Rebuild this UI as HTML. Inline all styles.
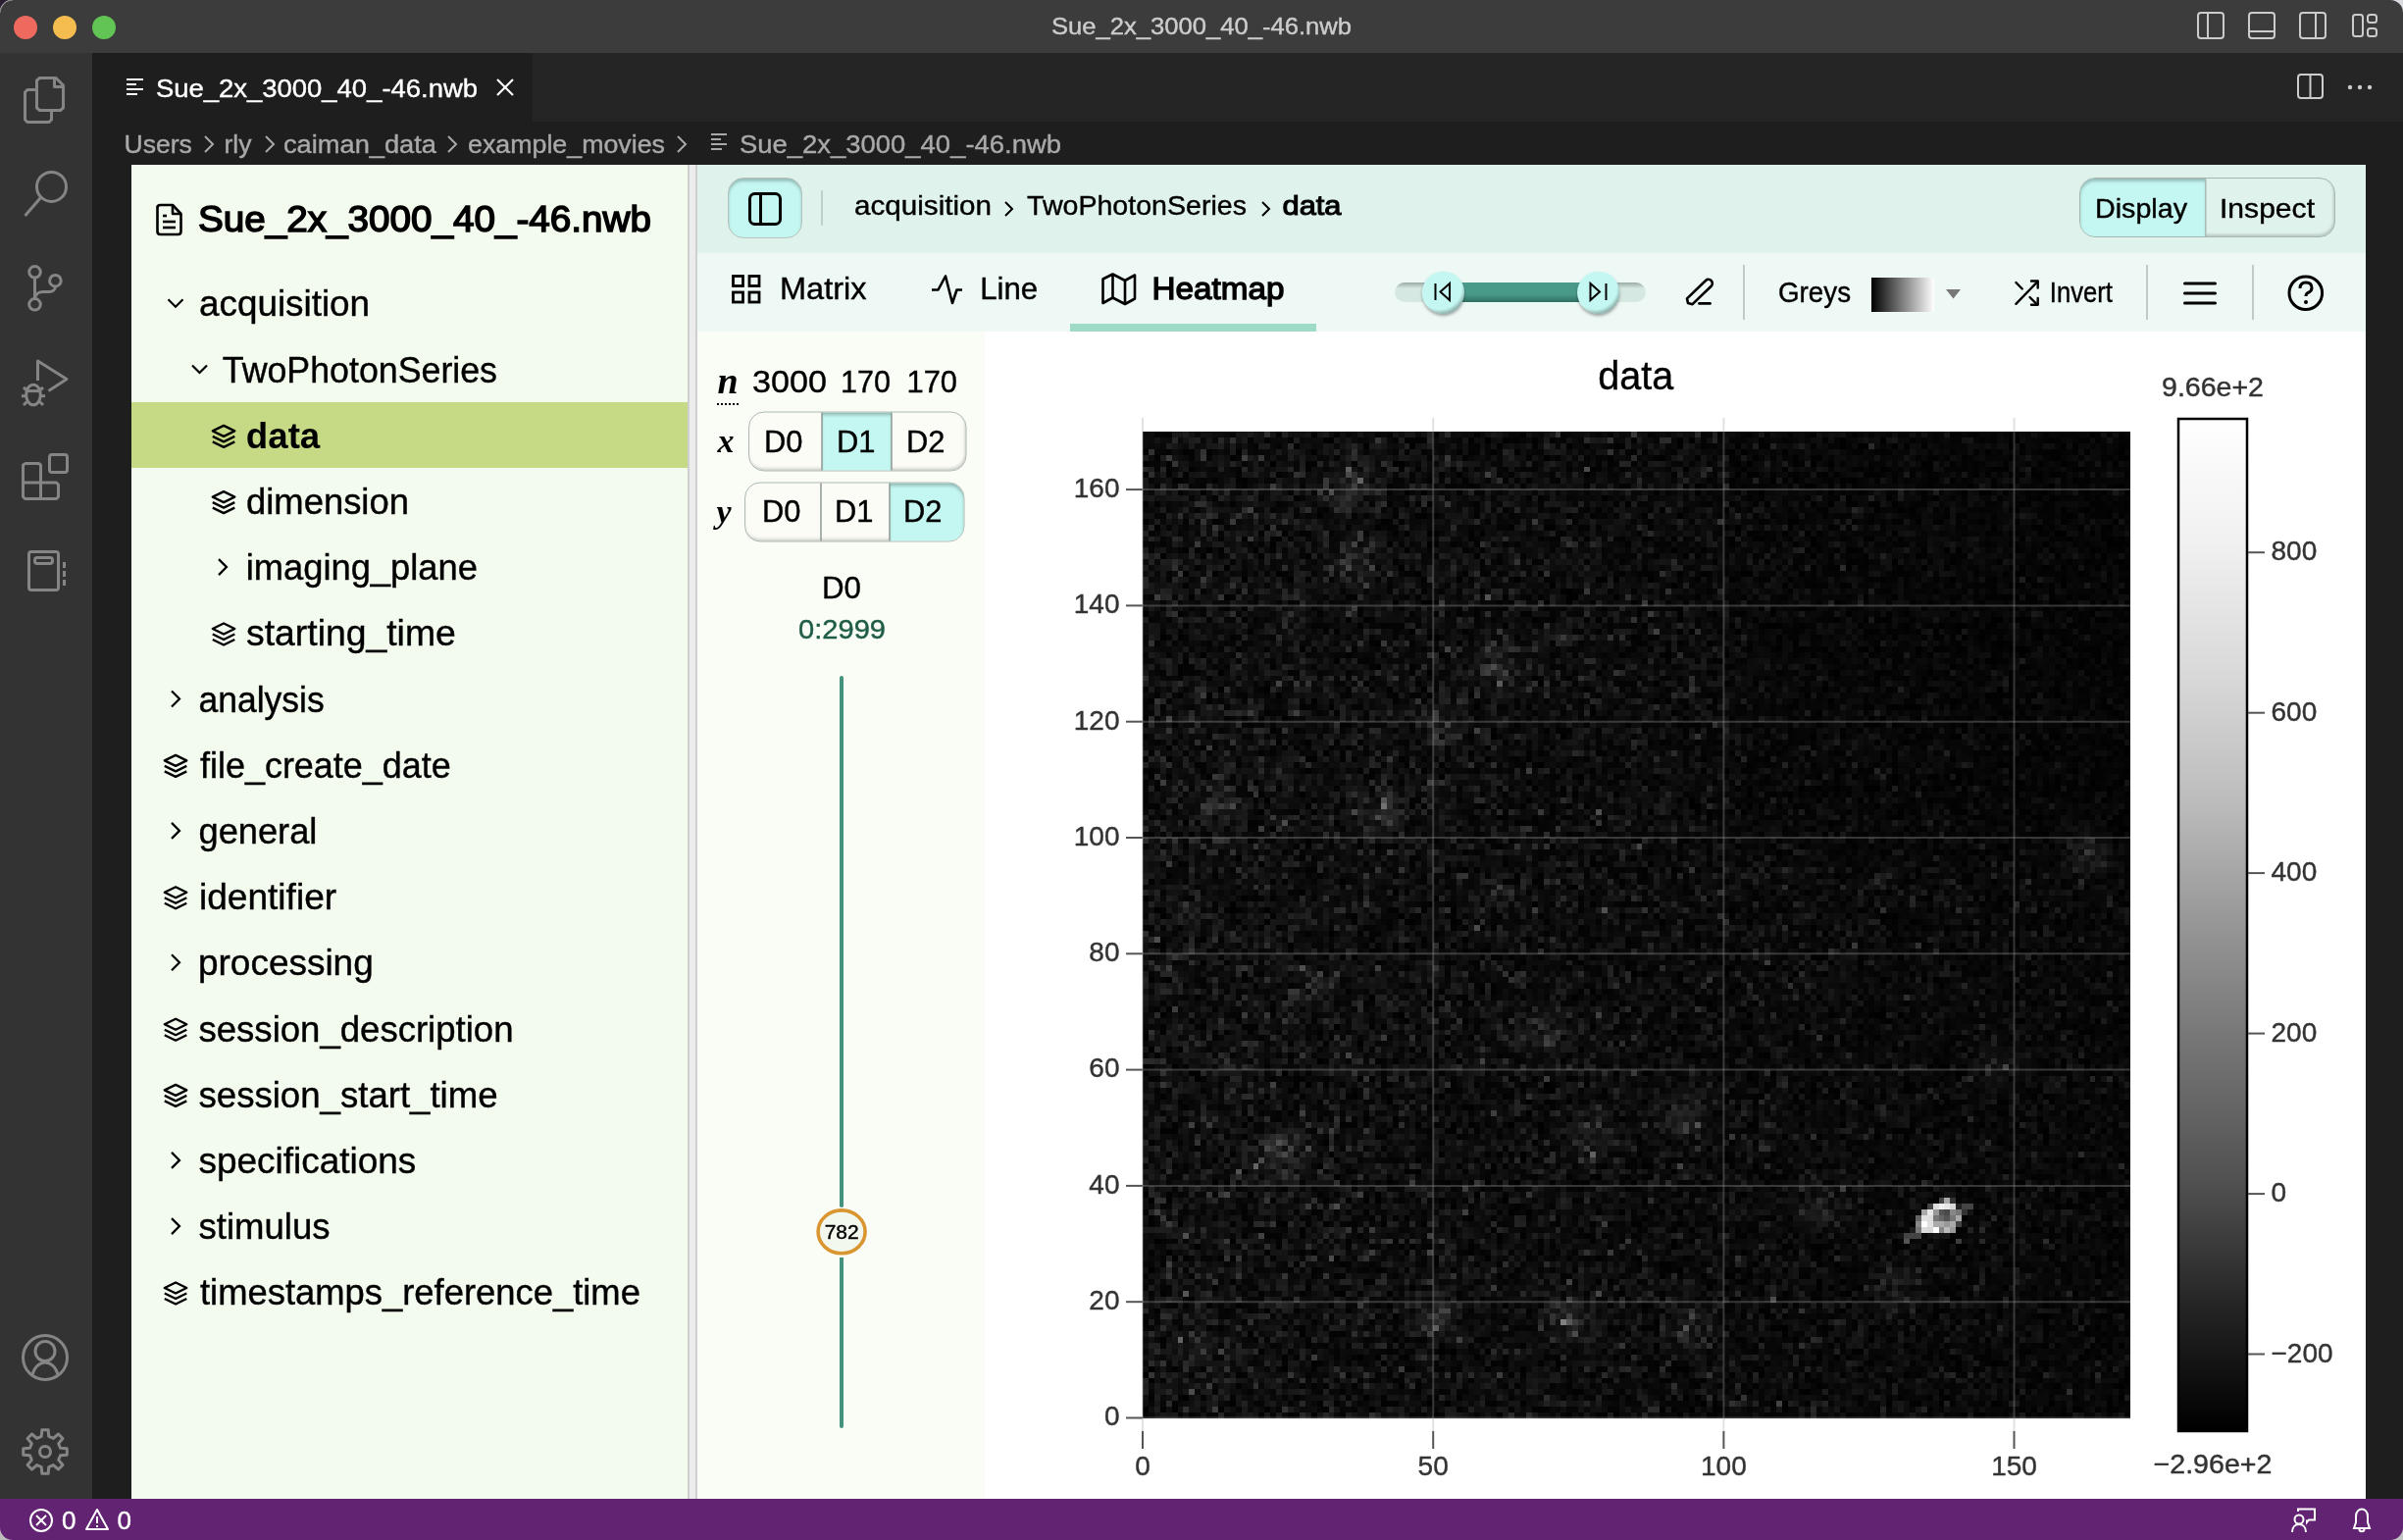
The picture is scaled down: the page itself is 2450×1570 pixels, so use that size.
<!DOCTYPE html><html><head><meta charset="utf-8"><style>html,body{margin:0;padding:0;width:2450px;height:1570px;overflow:hidden;background:#1e1e1e}svg text{font-family:"Liberation Sans",sans-serif}</style></head><body><svg id="base" width="2450" height="1570" viewBox="0 0 2450 1570" style="position:absolute;left:0;top:0;will-change:transform" font-family="Liberation Sans, sans-serif"><rect x="0" y="0" width="2450" height="54" fill="#3c3c3c" /><circle cx="26" cy="28" r="12" fill="#ee6a5f"/><circle cx="66" cy="28" r="12" fill="#f5bd4f"/><circle cx="106" cy="28" r="12" fill="#61c454"/><text x="1225" y="35" font-size="24.5" fill="#cccccc" text-anchor="middle" textLength="306" lengthAdjust="spacingAndGlyphs" stroke="#cccccc" stroke-width="0.4" >Sue_2x_3000_40_-46.nwb</text><g fill="none" stroke="#cccccc" stroke-width="2"><rect x="2241" y="13" width="26" height="26" rx="3"/><line x1="2251" y1="13" x2="2251" y2="39"/><rect x="2293" y="13" width="26" height="26" rx="3"/><line x1="2293" y1="32" x2="2319" y2="32"/><rect x="2345" y="13" width="26" height="26" rx="3"/><line x1="2361" y1="13" x2="2361" y2="39"/><rect x="2399" y="15" width="10" height="22" rx="2.5"/><rect x="2414" y="15" width="9" height="8" rx="2.5"/><rect x="2414" y="29" width="9" height="8" rx="2.5"/></g><rect x="0" y="54" width="94" height="1474" fill="#333333" /><g fill="none" stroke="#858585" stroke-width="3" stroke-linejoin="round"><path d="M37.5 90 V82 L40.5 79.5 H57 L64.5 87 V110 L61.5 112.5 H40.5 L37.5 110 Z"/><path d="M55.5 79.5 V88.5 H64.5"/><path d="M37.5 91.5 H28 L25.5 94 V122 L28 124.5 H50 L52.5 122 V112.5"/><circle cx="52.5" cy="190.4" r="15"/><line x1="41.5" y1="201.5" x2="25.5" y2="220"/><circle cx="35.5" cy="277.3" r="5.8"/><circle cx="56.4" cy="286.2" r="5.8"/><circle cx="35.5" cy="310.3" r="5.8"/><path d="M35.5 283.2 V304.5"/><path d="M35.7 303 C37 299 40 297.5 44 297.5 H50 C54 297.5 56.4 295 56.4 292"/><path d="M38.5 388 V368 L68 386.5 L49.5 398.5"/><ellipse cx="34" cy="402.5" rx="7.3" ry="10.3"/><line x1="26" y1="398.6" x2="42" y2="398.6"/><line x1="22" y1="403.7" x2="26.5" y2="403.7"/><line x1="41.5" y1="403.7" x2="46" y2="403.7"/><line x1="24" y1="395" x2="27.5" y2="398"/><line x1="44" y1="395" x2="40.5" y2="398"/><line x1="24" y1="413" x2="27.5" y2="409.5"/><line x1="44" y1="413" x2="40.5" y2="409.5"/><path d="M23.5 490.5 V474 L26 472.5 H39.5 L41.5 474 V508.5 M23.5 490.5 V506.5 L25.5 508.5 H57.5 L59.5 506.5 V494 L57.5 492 H23.5"/><rect x="50.5" y="463.5" width="18" height="18" rx="2.5"/><rect x="29.5" y="562.5" width="30" height="39" rx="2.5"/><rect x="35.5" y="568.5" width="18" height="6" rx="2.5"/><line x1="65.5" y1="573" x2="65.5" y2="579"/><line x1="65.5" y1="582" x2="65.5" y2="588"/><line x1="65.5" y1="591" x2="65.5" y2="597"/><circle cx="46" cy="1384" r="22.5"/><circle cx="46" cy="1377.5" r="10"/><path d="M33 1402 C35 1393 41 1389 46 1389 C51 1389 57 1393 59 1402"/><path d="M42.26 1464.44 L42.83 1457.72 L49.17 1457.72 L49.74 1464.44 L54.36 1466.36 L59.51 1462.01 L63.99 1466.49 L59.64 1471.64 L61.56 1476.26 L68.28 1476.83 L68.28 1483.17 L61.56 1483.74 L59.64 1488.36 L63.99 1493.51 L59.51 1497.99 L54.36 1493.64 L49.74 1495.56 L49.17 1502.28 L42.83 1502.28 L42.26 1495.56 L37.64 1493.64 L32.49 1497.99 L28.01 1493.51 L32.36 1488.36 L30.44 1483.74 L23.72 1483.17 L23.72 1476.83 L30.44 1476.26 L32.36 1471.64 L28.01 1466.49 L32.49 1462.01 L37.64 1466.36 Z"/><circle cx="46" cy="1480" r="5.5"/></g><rect x="94" y="54" width="2356" height="70" fill="#252526" /><rect x="94" y="54" width="449" height="70" fill="#1e1e1e" /><g stroke="#ffffff" stroke-width="2"><line x1="129" y1="81" x2="146" y2="81"/><line x1="129" y1="86" x2="139" y2="86"/><line x1="129" y1="91" x2="146" y2="91"/><line x1="129" y1="96" x2="140" y2="96"/></g><text x="159" y="99.4" font-size="26.5" fill="#ffffff" textLength="328" lengthAdjust="spacingAndGlyphs" stroke="#ffffff" stroke-width="0.4" >Sue_2x_3000_40_-46.nwb</text><g stroke="#ffffff" stroke-width="2.2"><line x1="507" y1="81" x2="523" y2="97"/><line x1="523" y1="81" x2="507" y2="97"/></g><g fill="none" stroke="#cccccc" stroke-width="2"><rect x="2343" y="76" width="25" height="24" rx="3"/><line x1="2355.5" y1="76" x2="2355.5" y2="100"/></g><g fill="#cccccc"><circle cx="2396" cy="89" r="2.2"/><circle cx="2406" cy="89" r="2.2"/><circle cx="2416" cy="89" r="2.2"/></g><rect x="94" y="124" width="2356" height="44" fill="#1e1e1e" /><text x="126.5" y="155.8" font-size="26.5" fill="#a9a9a9" stroke="#a9a9a9" stroke-width="0.4" >Users</text><text x="228.5" y="155.8" font-size="26.5" fill="#a9a9a9" stroke="#a9a9a9" stroke-width="0.4" >rly</text><text x="289" y="155.8" font-size="26.5" fill="#a9a9a9" textLength="156" lengthAdjust="spacingAndGlyphs" stroke="#a9a9a9" stroke-width="0.4" >caiman_data</text><text x="477" y="155.8" font-size="26.5" fill="#a9a9a9" textLength="201" lengthAdjust="spacingAndGlyphs" stroke="#a9a9a9" stroke-width="0.4" >example_movies</text><text x="754" y="155.8" font-size="26.5" fill="#a9a9a9" textLength="328" lengthAdjust="spacingAndGlyphs" stroke="#a9a9a9" stroke-width="0.4" >Sue_2x_3000_40_-46.nwb</text><g fill="none" stroke="#a9a9a9" stroke-width="2"><path d="M209 139 L217 147 L209 155"/><path d="M271 139 L279 147 L271 155"/><path d="M457 139 L465 147 L457 155"/><path d="M691 139 L699 147 L691 155"/></g><g stroke="#a9a9a9" stroke-width="2"><line x1="725" y1="137" x2="741" y2="137"/><line x1="725" y1="142" x2="735" y2="142"/><line x1="725" y1="147" x2="741" y2="147"/><line x1="725" y1="152" x2="736" y2="152"/></g><rect x="0" y="1528" width="2450" height="42" fill="#622372" /><g fill="none" stroke="#ffffff" stroke-width="2"><circle cx="42" cy="1550" r="11"/><line x1="37" y1="1545" x2="47" y2="1555"/><line x1="47" y1="1545" x2="37" y2="1555"/><path d="M99 1539 L110 1559 H88 Z" stroke-linejoin="round"/></g><g fill="#ffffff"><rect x="98" y="1546" width="2" height="7"/><rect x="98" y="1555" width="2" height="2"/></g><text x="63" y="1559" font-size="26" fill="#ffffff" stroke="#ffffff" stroke-width="0.4" >0</text><text x="119.5" y="1559" font-size="26" fill="#ffffff" stroke="#ffffff" stroke-width="0.4" >0</text><g fill="none" stroke="#ffffff" stroke-width="2"><circle cx="2344" cy="1549" r="4.5"/><path d="M2337 1562 C2337 1557 2340 1554 2344 1554 C2348 1554 2351 1557 2351 1562"/><path d="M2343 1541 V1538.5 H2360 V1549.5 H2354 L2352 1552 V1549.5"/><path d="M2400 1558 L2402 1552 V1546 C2402 1541 2405 1538.5 2408 1538.5 C2411 1538.5 2414 1541 2414 1546 V1552 L2416 1558 Z"/><path d="M2405.5 1559 C2405.5 1562 2410.5 1562 2410.5 1559"/></g><rect x="134" y="168" width="567" height="1360" fill="#f3faee" /><rect x="701" y="168" width="10" height="1360" fill="#ececec" /><rect x="701" y="168" width="2" height="1360" fill="#cfcfcf" /><rect x="709" y="168" width="2" height="1360" fill="#cfcfcf" /><g fill="none" stroke="#000" stroke-width="2.6" stroke-linejoin="round"><path d="M160.5 210.5 V236 Q160.5 239 163.5 239 H181.5 Q184.5 239 184.5 236 V218 L176 209 H163.5 Q160.5 209 160.5 212 Z"/><path d="M176 209 V218 H184.5"/><line x1="166" y1="220" x2="170" y2="220"/><line x1="166" y1="226" x2="179" y2="226"/><line x1="166" y1="232" x2="179" y2="232"/></g><text x="202" y="235.5" font-size="37" fill="#000" textLength="462" lengthAdjust="spacingAndGlyphs" stroke="#000" stroke-width="1.5" >Sue_2x_3000_40_-46.nwb</text><rect x="134" y="410" width="567" height="67" fill="#c6d985" /><path d="M171.5 305.3 L179.0 312.8 L186.5 305.3" fill="none" stroke="#000" stroke-width="2.2"/><text x="203.0" y="322.3" font-size="36" fill="#000" textLength="174.1" lengthAdjust="spacingAndGlyphs" stroke="#000" stroke-width="0.4" >acquisition</text><path d="M196 372.5 L203.5 380.0 L211 372.5" fill="none" stroke="#000" stroke-width="2.2"/><text x="226.8" y="389.5" font-size="36" fill="#000" textLength="280.2" lengthAdjust="spacingAndGlyphs" stroke="#000" stroke-width="0.4" >TwoPhotonSeries</text><g fill="none" stroke="#000" stroke-width="2.3" stroke-linejoin="round"><path d="M228.10000000000002 433.90000000000003 L239.3 439.40000000000003 L228.10000000000002 444.90000000000003 L216.8 439.40000000000003 Z"/><path d="M216.8 444.90000000000003 L228.10000000000002 450.40000000000003 L239.3 444.90000000000003"/><path d="M216.8 450.40000000000003 L228.10000000000002 455.90000000000003 L239.3 450.40000000000003"/></g><text x="250.8" y="456.70000000000005" font-size="36" fill="#000" font-weight="bold" textLength="75.5" lengthAdjust="spacingAndGlyphs" >data</text><g fill="none" stroke="#000" stroke-width="2.3" stroke-linejoin="round"><path d="M228.10000000000002 501.1000000000001 L239.3 506.6000000000001 L228.10000000000002 512.1000000000001 L216.8 506.6000000000001 Z"/><path d="M216.8 512.1000000000001 L228.10000000000002 517.6000000000001 L239.3 512.1000000000001"/><path d="M216.8 517.6000000000001 L228.10000000000002 523.1000000000001 L239.3 517.6000000000001"/></g><text x="251.0" y="523.9000000000001" font-size="36" fill="#000" textLength="165.9" lengthAdjust="spacingAndGlyphs" stroke="#000" stroke-width="0.4" >dimension</text><path d="M223 570.1 L231 578.1 L223 586.1" fill="none" stroke="#000" stroke-width="2.2"/><text x="250.7" y="591.1" font-size="36" fill="#000" textLength="236.2" lengthAdjust="spacingAndGlyphs" stroke="#000" stroke-width="0.4" >imaging_plane</text><g fill="none" stroke="#000" stroke-width="2.3" stroke-linejoin="round"><path d="M228.10000000000002 635.5 L239.3 641.0 L228.10000000000002 646.5 L216.8 641.0 Z"/><path d="M216.8 646.5 L228.10000000000002 652.0 L239.3 646.5"/><path d="M216.8 652.0 L228.10000000000002 657.5 L239.3 652.0"/></g><text x="251.0" y="658.3" font-size="36" fill="#000" textLength="213.8" lengthAdjust="spacingAndGlyphs" stroke="#000" stroke-width="0.4" >starting_time</text><path d="M175 704.5 L183 712.5 L175 720.5" fill="none" stroke="#000" stroke-width="2.2"/><text x="202.5" y="725.5" font-size="36" fill="#000" textLength="128.2" lengthAdjust="spacingAndGlyphs" stroke="#000" stroke-width="0.4" >analysis</text><g fill="none" stroke="#000" stroke-width="2.3" stroke-linejoin="round"><path d="M179.10000000000002 769.9000000000001 L190.3 775.4000000000001 L179.10000000000002 780.9000000000001 L167.8 775.4000000000001 Z"/><path d="M167.8 780.9000000000001 L179.10000000000002 786.4000000000001 L190.3 780.9000000000001"/><path d="M167.8 786.4000000000001 L179.10000000000002 791.9000000000001 L190.3 786.4000000000001"/></g><text x="204.0" y="792.7" font-size="36" fill="#000" textLength="255.7" lengthAdjust="spacingAndGlyphs" stroke="#000" stroke-width="0.4" >file_create_date</text><path d="M175 838.9000000000001 L183 846.9000000000001 L175 854.9000000000001" fill="none" stroke="#000" stroke-width="2.2"/><text x="202.5" y="859.9000000000001" font-size="36" fill="#000" textLength="120.9" lengthAdjust="spacingAndGlyphs" stroke="#000" stroke-width="0.4" >general</text><g fill="none" stroke="#000" stroke-width="2.3" stroke-linejoin="round"><path d="M179.10000000000002 904.3000000000002 L190.3 909.8000000000002 L179.10000000000002 915.3000000000002 L167.8 909.8000000000002 Z"/><path d="M167.8 915.3000000000002 L179.10000000000002 920.8000000000002 L190.3 915.3000000000002"/><path d="M167.8 920.8000000000002 L179.10000000000002 926.3000000000002 L190.3 920.8000000000002"/></g><text x="203.0" y="927.1000000000001" font-size="36" fill="#000" textLength="140.1" lengthAdjust="spacingAndGlyphs" stroke="#000" stroke-width="0.4" >identifier</text><path d="M175 973.3 L183 981.3 L175 989.3" fill="none" stroke="#000" stroke-width="2.2"/><text x="202.0" y="994.3" font-size="36" fill="#000" textLength="178.7" lengthAdjust="spacingAndGlyphs" stroke="#000" stroke-width="0.4" >processing</text><g fill="none" stroke="#000" stroke-width="2.3" stroke-linejoin="round"><path d="M179.10000000000002 1038.7 L190.3 1044.2 L179.10000000000002 1049.7 L167.8 1044.2 Z"/><path d="M167.8 1049.7 L179.10000000000002 1055.2 L190.3 1049.7"/><path d="M167.8 1055.2 L179.10000000000002 1060.7 L190.3 1055.2"/></g><text x="202.5" y="1061.5" font-size="36" fill="#000" textLength="321.0" lengthAdjust="spacingAndGlyphs" stroke="#000" stroke-width="0.4" >session_description</text><g fill="none" stroke="#000" stroke-width="2.3" stroke-linejoin="round"><path d="M179.10000000000002 1105.9 L190.3 1111.4 L179.10000000000002 1116.9 L167.8 1111.4 Z"/><path d="M167.8 1116.9 L179.10000000000002 1122.4 L190.3 1116.9"/><path d="M167.8 1122.4 L179.10000000000002 1127.9 L190.3 1122.4"/></g><text x="202.5" y="1128.7" font-size="36" fill="#000" textLength="305.1" lengthAdjust="spacingAndGlyphs" stroke="#000" stroke-width="0.4" >session_start_time</text><path d="M175 1174.9 L183 1182.9 L175 1190.9" fill="none" stroke="#000" stroke-width="2.2"/><text x="202.5" y="1195.9" font-size="36" fill="#000" textLength="221.8" lengthAdjust="spacingAndGlyphs" stroke="#000" stroke-width="0.4" >specifications</text><path d="M175 1242.1000000000001 L183 1250.1000000000001 L175 1258.1000000000001" fill="none" stroke="#000" stroke-width="2.2"/><text x="202.5" y="1263.1000000000001" font-size="36" fill="#000" textLength="134.0" lengthAdjust="spacingAndGlyphs" stroke="#000" stroke-width="0.4" >stimulus</text><g fill="none" stroke="#000" stroke-width="2.3" stroke-linejoin="round"><path d="M179.10000000000002 1307.5 L190.3 1313.0 L179.10000000000002 1318.5 L167.8 1313.0 Z"/><path d="M167.8 1318.5 L179.10000000000002 1324.0 L190.3 1318.5"/><path d="M167.8 1324.0 L179.10000000000002 1329.5 L190.3 1324.0"/></g><text x="204.0" y="1330.3" font-size="36" fill="#000" textLength="448.9" lengthAdjust="spacingAndGlyphs" stroke="#000" stroke-width="0.4" >timestamps_reference_time</text><rect x="711" y="168" width="1701" height="90" fill="#dff2ec" /><rect x="711" y="258" width="1701" height="80" fill="#eef8f4" /><rect x="711" y="338" width="293" height="1190" fill="#fafdf5" /><rect x="1004" y="338" width="1408" height="1190" fill="#ffffff" /><defs><filter id="insh" x="-10%" y="-10%" width="120%" height="120%"><feOffset in="SourceAlpha" dy="2.5" result="off"/><feGaussianBlur in="off" stdDeviation="1.6" result="ob"/><feComposite in="SourceAlpha" in2="ob" operator="out" result="inv"/><feFlood flood-color="#000" flood-opacity="0.45" result="fl"/><feComposite in="fl" in2="inv" operator="in" result="sh"/><feComposite in="sh" in2="SourceGraphic" operator="over"/></filter><filter id="insb" x="-10%" y="-10%" width="120%" height="120%"><feOffset in="SourceAlpha" dx="-1.5" dy="-2.5" result="off"/><feGaussianBlur in="off" stdDeviation="1.6" result="ob"/><feComposite in="SourceAlpha" in2="ob" operator="out" result="inv"/><feFlood flood-color="#000" flood-opacity="0.38" result="fl"/><feComposite in="fl" in2="inv" operator="in" result="sh"/><feComposite in="sh" in2="SourceGraphic" operator="over"/></filter><filter id="dsh" x="-20%" y="-20%" width="140%" height="150%"><feDropShadow dx="0" dy="2" stdDeviation="1.5" flood-color="#000" flood-opacity="0.35"/></filter><linearGradient id="greys" x1="0" y1="0" x2="1" y2="0"><stop offset="0" stop-color="#000"/><stop offset="1" stop-color="#fff"/></linearGradient><linearGradient id="cbar" x1="0" y1="0" x2="0" y2="1"><stop offset="0" stop-color="#ffffff"/><stop offset="0.125" stop-color="#f0f0f0"/><stop offset="0.25" stop-color="#d9d9d9"/><stop offset="0.375" stop-color="#bdbdbd"/><stop offset="0.5" stop-color="#969696"/><stop offset="0.625" stop-color="#737373"/><stop offset="0.75" stop-color="#525252"/><stop offset="0.875" stop-color="#252525"/><stop offset="1" stop-color="#000000"/></linearGradient><linearGradient id="track" x1="0" y1="0" x2="0" y2="1"><stop offset="0" stop-color="#9aa9a4"/><stop offset="0.3" stop-color="#d6e8e2"/><stop offset="1" stop-color="#d6e8e2"/></linearGradient><linearGradient id="fill" x1="0" y1="0" x2="0" y2="1"><stop offset="0" stop-color="#4a9a8a"/><stop offset="0.6" stop-color="#4a9a8a"/><stop offset="1" stop-color="#2f6e60"/></linearGradient><radialGradient id="thumb" cx="0.42" cy="0.38" r="0.66"><stop offset="0.78" stop-color="#c4f7f1"/><stop offset="1" stop-color="#7f9c98"/></radialGradient></defs><rect x="743" y="182" width="74" height="60" rx="15" fill="#c4f7f1" filter="url(#insh)"/><rect x="742.5" y="181.5" width="75" height="61" rx="15.5" fill="none" stroke="#8f9c98" stroke-opacity="0.55" stroke-width="1"/><g fill="none" stroke="#000" stroke-width="3"><rect x="764.5" y="197.5" width="31" height="31" rx="5"/><line x1="775.5" y1="197.5" x2="775.5" y2="228.5"/></g><rect x="837" y="194" width="2" height="36" fill="#bfcfca" /><text x="871" y="219.4" font-size="28" fill="#000" textLength="140" lengthAdjust="spacingAndGlyphs" stroke="#000" stroke-width="0.4" >acquisition</text><text x="1047" y="219.4" font-size="28" fill="#000" textLength="224" lengthAdjust="spacingAndGlyphs" stroke="#000" stroke-width="0.4" >TwoPhotonSeries</text><text x="1307.5" y="219.4" font-size="28.5" fill="#000" textLength="60" lengthAdjust="spacingAndGlyphs" stroke="#000" stroke-width="1.1" >data</text><g fill="none" stroke="#000" stroke-width="2"><path d="M1025 206 L1032 213 L1025 220"/><path d="M1287 206 L1294 213 L1287 220"/></g><rect x="2121" y="182" width="259" height="59" rx="15" fill="#e0f2ec" filter="url(#insb)"/><rect x="2120.5" y="181.5" width="260" height="60" rx="15.5" fill="none" stroke="#8f9c98" stroke-opacity="0.7" stroke-width="1"/><path d="M2136 182 H2249 V241 H2136 A15 15 0 0 1 2121 226 V197 A15 15 0 0 1 2136 182 Z" fill="#c4f7f1" filter="url(#insh)"/><rect x="2248" y="182" width="1.5" height="59" fill="#a9bcb6" /><text x="2136" y="222" font-size="28" fill="#000" textLength="94" lengthAdjust="spacingAndGlyphs" stroke="#000" stroke-width="0.4" >Display</text><text x="2263" y="222" font-size="28" fill="#000" textLength="97" lengthAdjust="spacingAndGlyphs" stroke="#000" stroke-width="0.4" >Inspect</text><g fill="none" stroke="#000" stroke-width="2.8"><rect x="747.5" y="281.5" width="10" height="10"/><rect x="764" y="281.5" width="10" height="10"/><rect x="747.5" y="298" width="10" height="10"/><rect x="764" y="298" width="10" height="10"/></g><text x="795" y="304.9" font-size="31.5" fill="#000" textLength="88.5" lengthAdjust="spacingAndGlyphs" stroke="#000" stroke-width="0.4" >Matrix</text><path d="M950 295.5 H956.5 L964 281.5 L971 309 L975.5 295.5 H981" fill="none" stroke="#000" stroke-width="2.6" stroke-linejoin="round"/><text x="999.2" y="304.9" font-size="31.8" fill="#000" textLength="59" lengthAdjust="spacingAndGlyphs" stroke="#000" stroke-width="0.4" >Line</text><path d="M1124.5 284.5 L1134.5 279.5 L1147 286 L1157 280.5 V304.5 L1147 310 L1134.5 303.5 L1124.5 309 Z M1134.5 279.5 V303.5 M1147 286 V310" fill="none" stroke="#000" stroke-width="2.6" stroke-linejoin="round"/><text x="1174.5" y="305" font-size="31.8" fill="#000" textLength="135" lengthAdjust="spacingAndGlyphs" stroke="#000" stroke-width="1.3" >Heatmap</text><rect x="1091" y="330" width="251" height="8" fill="#9ddbc7" /><rect x="1422" y="288" width="256" height="20" rx="10" fill="url(#track)"/><rect x="1472" y="288" width="158" height="20" fill="url(#fill)"/><g filter="url(#dsh)"><circle cx="1471.5" cy="298.3" r="21.6" fill="url(#thumb)"/><circle cx="1629.7" cy="298.3" r="21.6" fill="url(#thumb)"/></g><g fill="none" stroke="#000" stroke-width="2"><line x1="1463.5" y1="289" x2="1463.5" y2="306"/><path d="M1478 289 L1468.5 297.5 L1478 306 Z"/><line x1="1637.5" y1="289" x2="1637.5" y2="306"/><path d="M1621.5 289 L1631 297.5 L1621.5 306 Z"/></g><g transform="translate(1721,309) rotate(-44)" fill="none" stroke="#000" stroke-width="2.6" stroke-linejoin="round"><path d="M0 0 L2.5 -4 H29 A4 4 0 0 1 29 4 H2.5 Z"/></g><line x1="1732.5" y1="309.4" x2="1743.5" y2="309.4" stroke="#000" stroke-width="2.8" stroke-linecap="round"/><rect x="1777" y="270" width="2" height="56" fill="#c0cbc8" /><text x="1813" y="308" font-size="29" fill="#000" textLength="74" lengthAdjust="spacingAndGlyphs" stroke="#000" stroke-width="0.4" >Greys</text><rect x="1908" y="283" width="64" height="35" fill="url(#greys)"/><path d="M1984 295 L1999 295 L1991.5 304.5 Z" fill="#777"/><g fill="none" stroke="#000" stroke-width="2.4" stroke-linecap="round" stroke-linejoin="round"><path d="M2055.4 288 L2061.8 294.5"/><path d="M2055.4 309.8 L2077.5 287"/><path d="M2071 286.5 H2077.7 V293.5"/><path d="M2069.5 303 L2077 310.5"/><path d="M2077.7 304 V310.8 H2071"/></g><text x="2089.8" y="308" font-size="29" fill="#000" textLength="64" lengthAdjust="spacingAndGlyphs" stroke="#000" stroke-width="0.4" >Invert</text><rect x="2188" y="270" width="2" height="56" fill="#c0cbc8" /><g stroke="#000" stroke-width="3" stroke-linecap="round"><line x1="2227.5" y1="289" x2="2258.5" y2="289"/><line x1="2227.5" y1="299" x2="2258.5" y2="299"/><line x1="2227.5" y1="309" x2="2258.5" y2="309"/></g><rect x="2296" y="270" width="2" height="56" fill="#c0cbc8" /><g fill="none" stroke="#000" stroke-width="3"><circle cx="2350.8" cy="298.8" r="16.8"/><path d="M2345 294 Q2345 288 2351 288 Q2357 288 2357 293.5 Q2357 297 2353 298.5 Q2351 299.5 2351 302"/></g><circle cx="2351" cy="308" r="2" fill="#000"/><text x="742" y="400.5" font-size="38" fill="#000" font-weight="bold" text-anchor="middle" style="font-family:Liberation Serif,serif;font-style:italic">n</text><line x1="731" y1="412" x2="753" y2="412" stroke="#000" stroke-width="2" stroke-dasharray="2 2"/><text x="767" y="399.9" font-size="32" fill="#000" textLength="76" lengthAdjust="spacingAndGlyphs" stroke="#000" stroke-width="0.4" >3000</text><text x="857" y="399.9" font-size="32" fill="#000" textLength="51" lengthAdjust="spacingAndGlyphs" stroke="#000" stroke-width="0.4" >170</text><text x="924.5" y="399.9" font-size="32" fill="#000" textLength="51.5" lengthAdjust="spacingAndGlyphs" stroke="#000" stroke-width="0.4" >170</text><text x="740" y="461" font-size="34" fill="#000" font-weight="bold" text-anchor="middle" style="font-family:Liberation Serif,serif;font-style:italic">x</text><text x="738" y="533" font-size="34" fill="#000" font-weight="bold" text-anchor="middle" style="font-family:Liberation Serif,serif;font-style:italic">y</text><rect x="764" y="420.5" width="220.5" height="59" rx="15" fill="#fafcf5" filter="url(#insb)"/><rect x="763.5" y="420.0" width="221.5" height="60" rx="15.5" fill="none" stroke="#8f9c98" stroke-opacity="0.7" stroke-width="1"/><path d="M838 420.5 H909 V479.5 H838 Z" fill="#c4f7f1" filter="url(#insh)"/><rect x="837.25" y="420.5" width="1.5" height="59" fill="#8f9a96"/><rect x="908.25" y="420.5" width="1.5" height="59" fill="#8f9a96"/><rect x="760" y="492.5" width="222.5" height="59" rx="15" fill="#fafcf5" filter="url(#insb)"/><rect x="759.5" y="492.0" width="223.5" height="60" rx="15.5" fill="none" stroke="#8f9c98" stroke-opacity="0.7" stroke-width="1"/><path d="M907 492.5 H967.5 A15 15 0 0 1 982.5 507.5 V536.5 A15 15 0 0 1 967.5 551.5 H907 Z" fill="#c4f7f1" filter="url(#insh)"/><rect x="836.25" y="492.5" width="1.5" height="59" fill="#8f9a96"/><rect x="906.25" y="492.5" width="1.5" height="59" fill="#8f9a96"/><text x="779" y="460.7" font-size="30.8" fill="#000" textLength="39.5" lengthAdjust="spacingAndGlyphs" stroke="#000" stroke-width="0.4" >D0</text><text x="853" y="460.7" font-size="30.8" fill="#000" textLength="39.5" lengthAdjust="spacingAndGlyphs" stroke="#000" stroke-width="0.4" >D1</text><text x="924" y="460.7" font-size="30.8" fill="#000" textLength="39.5" lengthAdjust="spacingAndGlyphs" stroke="#000" stroke-width="0.4" >D2</text><text x="777" y="531.5" font-size="30.8" fill="#000" textLength="39.5" lengthAdjust="spacingAndGlyphs" stroke="#000" stroke-width="0.4" >D0</text><text x="851" y="531.5" font-size="30.8" fill="#000" textLength="39.5" lengthAdjust="spacingAndGlyphs" stroke="#000" stroke-width="0.4" >D1</text><text x="921" y="531.5" font-size="30.8" fill="#000" textLength="39.5" lengthAdjust="spacingAndGlyphs" stroke="#000" stroke-width="0.4" >D2</text><text x="858" y="610" font-size="31.7" fill="#000" text-anchor="middle" textLength="40" lengthAdjust="spacingAndGlyphs" stroke="#000" stroke-width="0.4" >D0</text><text x="858.5" y="651" font-size="27" fill="#1f5c47" text-anchor="middle" textLength="89" lengthAdjust="spacingAndGlyphs" stroke="#1f5c47" stroke-width="0.4" >0:2999</text><line x1="858" y1="691" x2="858" y2="1229" stroke="#43937f" stroke-width="4" stroke-linecap="round"/><rect x="856" y="1226" width="4" height="4" fill="#43937f"/><line x1="858" y1="1284" x2="858" y2="1454" stroke="#43937f" stroke-width="4" stroke-linecap="round"/><rect x="856" y="1282" width="4" height="4" fill="#43937f"/><ellipse cx="858.1" cy="1255.8" rx="25.2" ry="23.1" fill="none" stroke="#ffffff" stroke-width="3"/><ellipse cx="858.1" cy="1255.8" rx="24" ry="21.95" fill="#f3f8ee" stroke="#d9952f" stroke-width="3.6"/><text x="858.2" y="1262.8" font-size="20" fill="#000" text-anchor="middle" textLength="35" lengthAdjust="spacingAndGlyphs" stroke="#000" stroke-width="0.4" >782</text><rect x="1165" y="440" width="1007" height="1005.5" fill="#151515" /><text x="1667.8" y="397" font-size="41.5" fill="#000" text-anchor="middle" textLength="77" lengthAdjust="spacingAndGlyphs" stroke="#000" stroke-width="0.4" >data</text><line x1="1148" y1="1445.5" x2="1165" y2="1445.5" stroke="#555" stroke-width="2"/><text x="1141.5" y="1453.3" font-size="28" fill="#333333" text-anchor="end" stroke="#333333" stroke-width="0.4" >0</text><line x1="1148" y1="1327.2" x2="1165" y2="1327.2" stroke="#555" stroke-width="2"/><text x="1141.5" y="1335.0058823529412" font-size="28" fill="#333333" text-anchor="end" stroke="#333333" stroke-width="0.4" >20</text><line x1="1148" y1="1208.9" x2="1165" y2="1208.9" stroke="#555" stroke-width="2"/><text x="1141.5" y="1216.7117647058824" font-size="28" fill="#333333" text-anchor="end" stroke="#333333" stroke-width="0.4" >40</text><line x1="1148" y1="1090.6" x2="1165" y2="1090.6" stroke="#555" stroke-width="2"/><text x="1141.5" y="1098.4176470588234" font-size="28" fill="#333333" text-anchor="end" stroke="#333333" stroke-width="0.4" >60</text><line x1="1148" y1="972.3" x2="1165" y2="972.3" stroke="#555" stroke-width="2"/><text x="1141.5" y="980.1235294117646" font-size="28" fill="#333333" text-anchor="end" stroke="#333333" stroke-width="0.4" >80</text><line x1="1148" y1="854.0" x2="1165" y2="854.0" stroke="#555" stroke-width="2"/><text x="1141.5" y="861.8294117647058" font-size="28" fill="#333333" text-anchor="end" stroke="#333333" stroke-width="0.4" >100</text><line x1="1148" y1="735.7" x2="1165" y2="735.7" stroke="#555" stroke-width="2"/><text x="1141.5" y="743.535294117647" font-size="28" fill="#333333" text-anchor="end" stroke="#333333" stroke-width="0.4" >120</text><line x1="1148" y1="617.4" x2="1165" y2="617.4" stroke="#555" stroke-width="2"/><text x="1141.5" y="625.2411764705881" font-size="28" fill="#333333" text-anchor="end" stroke="#333333" stroke-width="0.4" >140</text><line x1="1148" y1="499.1" x2="1165" y2="499.1" stroke="#555" stroke-width="2"/><text x="1141.5" y="506.9470588235294" font-size="28" fill="#333333" text-anchor="end" stroke="#333333" stroke-width="0.4" >160</text><line x1="1165.0" y1="1459" x2="1165.0" y2="1477" stroke="#555" stroke-width="2"/><text x="1165.0" y="1504.2" font-size="28" fill="#333333" text-anchor="middle" stroke="#333333" stroke-width="0.4" >0</text><line x1="1461.2" y1="1459" x2="1461.2" y2="1477" stroke="#555" stroke-width="2"/><text x="1461.1764705882354" y="1504.2" font-size="28" fill="#333333" text-anchor="middle" stroke="#333333" stroke-width="0.4" >50</text><line x1="1757.4" y1="1459" x2="1757.4" y2="1477" stroke="#555" stroke-width="2"/><text x="1757.3529411764707" y="1504.2" font-size="28" fill="#333333" text-anchor="middle" stroke="#333333" stroke-width="0.4" >100</text><line x1="2053.5" y1="1459" x2="2053.5" y2="1477" stroke="#555" stroke-width="2"/><text x="2053.529411764706" y="1504.2" font-size="28" fill="#333333" text-anchor="middle" stroke="#333333" stroke-width="0.4" >150</text><rect x="2221" y="427" width="70" height="1032" fill="url(#cbar)" stroke="#000" stroke-width="2.5"/><text x="2256" y="404" font-size="28" fill="#333333" text-anchor="middle" textLength="104" lengthAdjust="spacingAndGlyphs" stroke="#333333" stroke-width="0.4" >9.66e+2</text><text x="2256" y="1501.7" font-size="28" fill="#333333" text-anchor="middle" textLength="121" lengthAdjust="spacingAndGlyphs" stroke="#333333" stroke-width="0.4" >−2.96e+2</text><line x1="2292" y1="563.2" x2="2309" y2="563.2" stroke="#555" stroke-width="2"/><text x="2315.5" y="571.1806656101426" font-size="28" fill="#333333" stroke="#333333" stroke-width="0.4" >800</text><line x1="2292" y1="726.7" x2="2309" y2="726.7" stroke="#555" stroke-width="2"/><text x="2315.5" y="734.6513470681458" font-size="28" fill="#333333" stroke="#333333" stroke-width="0.4" >600</text><line x1="2292" y1="890.1" x2="2309" y2="890.1" stroke="#555" stroke-width="2"/><text x="2315.5" y="898.1220285261489" font-size="28" fill="#333333" stroke="#333333" stroke-width="0.4" >400</text><line x1="2292" y1="1053.6" x2="2309" y2="1053.6" stroke="#555" stroke-width="2"/><text x="2315.5" y="1061.592709984152" font-size="28" fill="#333333" stroke="#333333" stroke-width="0.4" >200</text><line x1="2292" y1="1217.1" x2="2309" y2="1217.1" stroke="#555" stroke-width="2"/><text x="2315.5" y="1225.0633914421553" font-size="28" fill="#333333" stroke="#333333" stroke-width="0.4" >0</text><line x1="2292" y1="1380.5" x2="2309" y2="1380.5" stroke="#555" stroke-width="2"/><text x="2315.5" y="1388.5340729001584" font-size="28" fill="#333333" stroke="#333333" stroke-width="0.4" >−200</text><rect x="2412" y="168" width="38" height="1360" fill="#1e1e1e" /></svg><canvas id="hm" width="170" height="170" style="position:absolute;left:1165px;top:440px;width:1007px;height:1005.5px;image-rendering:pixelated"></canvas><svg id="over" width="2450" height="1570" viewBox="0 0 2450 1570" style="position:absolute;left:0;top:0;pointer-events:none;will-change:transform" font-family="Liberation Sans, sans-serif"><line x1="1165" y1="1445.5" x2="2172" y2="1445.5" stroke="#a3a3a3" stroke-opacity="0.32" stroke-width="2"/><line x1="1165" y1="1327.2" x2="2172" y2="1327.2" stroke="#a3a3a3" stroke-opacity="0.32" stroke-width="2"/><line x1="1165" y1="1208.9" x2="2172" y2="1208.9" stroke="#a3a3a3" stroke-opacity="0.32" stroke-width="2"/><line x1="1165" y1="1090.6" x2="2172" y2="1090.6" stroke="#a3a3a3" stroke-opacity="0.32" stroke-width="2"/><line x1="1165" y1="972.3" x2="2172" y2="972.3" stroke="#a3a3a3" stroke-opacity="0.32" stroke-width="2"/><line x1="1165" y1="854.0" x2="2172" y2="854.0" stroke="#a3a3a3" stroke-opacity="0.32" stroke-width="2"/><line x1="1165" y1="735.7" x2="2172" y2="735.7" stroke="#a3a3a3" stroke-opacity="0.32" stroke-width="2"/><line x1="1165" y1="617.4" x2="2172" y2="617.4" stroke="#a3a3a3" stroke-opacity="0.32" stroke-width="2"/><line x1="1165" y1="499.1" x2="2172" y2="499.1" stroke="#a3a3a3" stroke-opacity="0.32" stroke-width="2"/><line x1="1165.0" y1="426" x2="1165.0" y2="1459" stroke="#a3a3a3" stroke-opacity="0.32" stroke-width="2"/><line x1="1461.2" y1="426" x2="1461.2" y2="1459" stroke="#a3a3a3" stroke-opacity="0.32" stroke-width="2"/><line x1="1757.4" y1="426" x2="1757.4" y2="1459" stroke="#a3a3a3" stroke-opacity="0.32" stroke-width="2"/><line x1="2053.5" y1="426" x2="2053.5" y2="1459" stroke="#a3a3a3" stroke-opacity="0.32" stroke-width="2"/><path d="M0 0 H13 A13 13 0 0 0 0 13 Z" fill="#2a1d33"/><path d="M13 0 A13 13 0 0 0 0 13" fill="none" stroke="#9a9a9a" stroke-width="1.2"/><path d="M2450 0 H2437 A13 13 0 0 1 2450 13 Z" fill="#d9dbde"/><path d="M0 1570 H13 A13 13 0 0 1 0 1557 Z" fill="#bdbdbd"/><path d="M2450 1570 H2437 A13 13 0 0 0 2450 1557 Z" fill="#c4c4c4"/></svg><script>
(function(){
var c=document.getElementById('hm');var g=c.getContext('2d');
var im=g.createImageData(170,170);var d=im.data;
var s=123456789;function r(){s^=s<<13;s>>>=0;s^=s>>>17;s^=s<<5;s>>>=0;return (s>>>0)/4294967296;}
function gs(){var u=r()||1e-9,v=r();return Math.sqrt(-2*Math.log(u))*Math.cos(6.2831853*v);}
var spots=[[35,160,30],[37,147,25],[60,129,30],[51,119,20],[13,106,18],[40,103,22],[162,97,25],[68,66,20],[93,52,25],[23,45,30],[77,48,20],[73,17,30],[50,17,28],[94,16,22],[9,12,18],[116,36,18],[129,22,18],[147,61,15],[30,75,12],[15,60,12],[60,90,10]];
for(var y=0;y<170;y++){for(var x=0;x<170;x++){
 var dy=169-y; var m=9+9*(1-x/170); if(x>100&&dy>95) m-=3;
 var add=0; for(var k=0;k<spots.length;k++){var ex=x-spots[k][0],ey=dy-spots[k][1];var dd=ex*ex+ey*ey; if(dd<60) add+=spots[k][2]*Math.exp(-dd/14);}
 var u=r()||1e-9, u2=r()||1e-9; var v=-(m+add*0.5)*(Math.log(u)+Math.log(u2))*0.5 + add*0.45;
 v=Math.max(0,Math.min(255,v));var i=(y*170+x)*4;d[i]=d[i+1]=d[i+2]=v;d[i+3]=255;}}
var blob=[[137,132,0x44],[138,132,0xaa],[139,132,0x33],
[135,133,0x44],[136,133,0xdd],[137,133,0xf0],[138,133,0xe8],[139,133,0xd8],[140,133,0x22],[141,133,0x44],[142,133,0x44],
[134,134,0xaa],[135,134,0xe8],[136,134,0x99],[137,134,0x55],[138,134,0x4a],[139,134,0x88],[140,134,0x77],[141,134,0x33],
[133,135,0x66],[134,135,0xe0],[135,135,0xdd],[136,135,0x77],[137,135,0x66],[138,135,0x55],[139,135,0x77],[140,135,0xaa],
[133,136,0x88],[134,136,0xff],[135,136,0xe0],[136,136,0xaa],[137,136,0xaa],[138,136,0x99],[139,136,0xaa],[140,136,0x44],
[133,137,0x77],[134,137,0xdd],[135,137,0xd8],[136,137,0xff],[137,137,0x88],[138,137,0xbb],[139,137,0x99],
[131,138,0x44],[132,138,0x44],[133,138,0x44],[131,139,0x55]];
for(var k=0;k<blob.length;k++){var i=(blob[k][1]*170+blob[k][0])*4;d[i]=d[i+1]=d[i+2]=blob[k][2];}
g.putImageData(im,0,0);
})();
</script></body></html>
